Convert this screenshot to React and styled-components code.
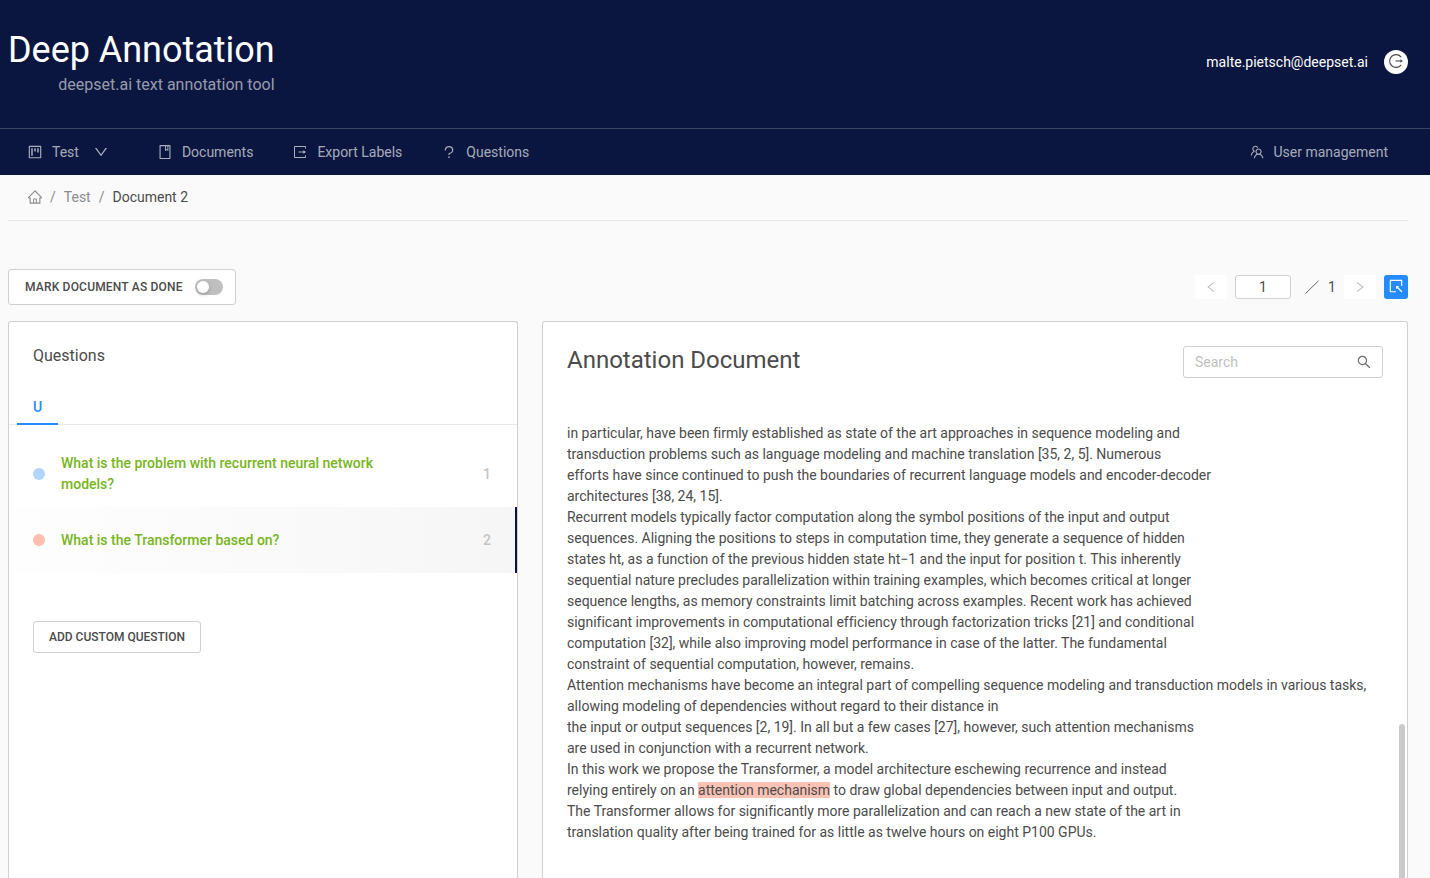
import React from "react";
import styled, { createGlobalStyle, css } from "styled-components";
import {
  AiOutlineProject,
  AiOutlineDown,
  AiOutlineBook,
  AiOutlineQuestion,
  AiOutlineTeam,
  AiOutlineHome,
  AiOutlineSelect,
  AiOutlineSearch,
  AiOutlineLeft,
  AiOutlineRight,
} from "react-icons/ai";

const GlobalStyle = createGlobalStyle`
  *, *::before, *::after { box-sizing: border-box; }
  html, body { margin: 0; padding: 0; overflow: hidden; }
  body {
    background: #fafafa;
    color: #4b4b4b;
    font-family: Roboto, "Liberation Sans", sans-serif;
    font-size: 14px;
    line-height: 21px;
  }
  svg { display: block; flex: none; }
  button, input { font-family: inherit; color: inherit; margin: 0; }
  h1, h2, h3, p, ol { margin: 0; padding: 0; font-weight: 400; list-style: none; }
`;

const Page = styled.div`
  display: flex;
  flex-direction: column;
  height: 878px;
  overflow: hidden;
`;

const Header = styled.header`
  display: flex;
  justify-content: space-between;
  height: 128px;
  padding: 0 22px 0 8px;
  background: #0a163f;
  color: #fff;
  flex: none;
`;

const Brand = styled.div`
  display: flex;
  flex-direction: column;
  align-items: flex-end;
  padding-top: 27px;
`;

const BrandTitle = styled.h1`
  font-size: 36px;
  line-height: 46px;
  letter-spacing: -0.03px;
`;

const BrandSubtitle = styled.p`
  font-size: 16px;
  line-height: 24px;
  color: rgba(255, 255, 255, 0.58);
`;

const Account = styled.div`
  display: flex;
  align-items: center;
  align-self: flex-start;
  gap: 16px;
  margin-top: 50px;
  height: 24px;
`;

const LogoutButton = styled.button`
  display: flex;
  align-items: center;
  justify-content: center;
  width: 24px;
  height: 24px;
  padding: 0 0 2px;
  border: 0;
  border-radius: 50%;
  background: #fff;
  color: #4b4b4b;
  font-size: 14px;
`;

const Nav = styled.nav`
  display: flex;
  height: 47px;
  padding: 0 42px 0 28px;
  gap: 40px;
  background: #0a163f;
  border-top: 1px solid #3b4565;
  flex: none;
`;

const NavItem = styled.a`
  display: flex;
  align-items: center;
  gap: 10px;
  color: rgba(255, 255, 255, 0.65);
  margin-left: ${(p) => (p.$end ? "auto" : "0")};
  margin-right: ${(p) => (p.$menu ? "10px" : "0")};
`;

const MenuArrow = styled.span`
  margin-left: 5px;
`;

const Content = styled.main`
  display: flex;
  flex-direction: column;
  flex: 1;
  min-height: 0;
  padding: 0 22px 0 8px;
`;

const Breadcrumb = styled.div`
  display: flex;
  align-items: center;
  gap: 8px;
  height: 46px;
  padding: 0 20px 1px;
  border-bottom: 1px solid #e8e8e8;
  color: #8c8c8c;
  flex: none;
`;

const CurrentCrumb = styled.span`
  color: #4b4b4b;
`;

const Toolbar = styled.div`
  display: flex;
  justify-content: space-between;
  align-items: center;
  margin: 48px 0 16px;
  height: 36px;
  flex: none;
`;

const outlined = css`
  background: #fff;
  border: 1px solid #d0d0d0;
  border-radius: 3px;
`;

const DoneToggle = styled.div`
  ${outlined}
  display: flex;
  align-items: center;
  justify-content: space-between;
  width: 228px;
  height: 36px;
  padding: 0 12px 0 16px;
  font-size: 12px;
  font-weight: 500;
  letter-spacing: 0.19px;
`;

const Switch = styled.span`
  display: flex;
  align-items: center;
  width: 28px;
  height: 16px;
  padding: 0 2px;
  border-radius: 8px;
  background: #bfbfbf;

  &::after {
    content: "";
    width: 12px;
    height: 12px;
    border-radius: 50%;
    background: #fff;
    box-shadow: 0 2px 4px rgba(0, 35, 11, 0.2);
  }
`;

const Pager = styled.div`
  display: flex;
  align-items: center;
  gap: 8px;
`;

const PagerButton = styled.button`
  display: flex;
  align-items: center;
  justify-content: center;
  width: 32px;
  height: 24px;
  padding: 0;
  border: 0;
  border-radius: 2px;
  background: #fff;
  color: #b9b9b9;
  font-size: 12px;
`;

const PageInput = styled.input`
  ${outlined}
  width: 56px;
  height: 24px;
  padding: 0;
  text-align: center;
  font-size: 14px;
`;

const PageTotal = styled.div`
  display: flex;
  align-items: center;
  gap: 9px;
  width: 37px;
  padding-left: 6px;
`;

const SelectButton = styled(PagerButton)`
  width: 24px;
  padding-bottom: 2px;
  border-radius: 3px;
  background: #268bff;
  color: #fff;
  font-size: 14px;
`;

const Columns = styled.div`
  display: grid;
  grid-template-columns: 510px 866px;
  gap: 24px;
  flex: 1;
  min-height: 0;
`;

const Panel = styled.section`
  ${outlined}
  border-bottom: 0;
  border-radius: 3px 3px 0 0;
  min-height: 0;
`;

const PanelTitle = styled.h3`
  padding: 22px 24px 0;
  font-size: 16px;
  line-height: 24px;
`;

const Tabs = styled.div`
  display: flex;
  height: 38px;
  margin-top: 19px;
  padding-left: 8px;
  border-bottom: 1px solid #e8e8e8;
`;

const Tab = styled.div`
  width: 41px;
  height: 38px;
  padding: 10px 16px 0;
  border-bottom: 2px solid #268bff;
  color: #268bff;
  font-weight: 500;
`;

const QuestionList = styled.ol`
  padding-top: 16px;
`;

const Question = styled.li`
  display: flex;
  align-items: center;
  height: 66px;
  padding: 0 ${(p) => (p.$active ? "24px" : "26px")} 0 24px;
  ${(p) =>
    p.$active &&
    css`
      background: linear-gradient(90deg, #fefefe, #f6f6f6);
      border-right: 2px solid #0a163f;
    `}
`;

const Dot = styled.span`
  width: 12px;
  height: 12px;
  border-radius: 50%;
  background: ${(p) => p.$color};
`;

const QuestionText = styled.span`
  width: 340px;
  margin-left: 16px;
  color: #78b51c;
  font-weight: 500;
`;

const QuestionNumber = styled.span`
  margin-left: auto;
  color: #c4c4c4;
  font-weight: 500;
`;

const AddButton = styled.button`
  ${outlined}
  display: block;
  width: 168px;
  height: 32px;
  margin: 48px 0 0 24px;
  padding: 0;
  font-size: 12px;
  font-weight: 500;
`;

const DocumentPanel = styled(Panel)`
  position: relative;
  padding: 24px;
`;

const DocumentHeader = styled.div`
  display: flex;
  justify-content: space-between;
  height: 32px;
`;

const DocumentTitle = styled.h2`
  font-size: 24px;
  line-height: 28px;
`;

const SearchBox = styled.label`
  ${outlined}
  display: flex;
  align-items: center;
  justify-content: space-between;
  width: 200px;
  height: 32px;
  padding: 0 11px;
  color: #6f6f6f;
  font-size: 14px;
`;

const SearchInput = styled.input`
  width: 140px;
  padding: 0;
  border: 0;
  outline: 0;
  background: none;
  font-size: 14px;

  &::placeholder {
    color: #bfbfbf;
    opacity: 1;
  }
`;

const DocumentText = styled.div`
  margin-top: 45px;
  white-space: pre;
  letter-spacing: -0.005px;
`;

const Highlight = styled.mark`
  background: #fcc3b5;
  color: inherit;
`;

const ScrollThumb = styled.div`
  position: absolute;
  right: 2px;
  top: 402px;
  bottom: 0;
  width: 6px;
  border-radius: 3px 3px 0 0;
  background: #cacaca;
`;

const questions = [
  { color: "#b1d5ff", text: "What is the problem with recurrent neural network models?" },
  { color: "#fcbeae", text: "What is the Transformer based on?", active: true },
];

const lines = [
  "in particular, have been firmly established as state of the art approaches in sequence modeling and",
  "transduction problems such as language modeling and machine translation [35, 2, 5]. Numerous",
  "efforts have since continued to push the boundaries of recurrent language models and encoder-decoder",
  "architectures [38, 24, 15].",
  "Recurrent models typically factor computation along the symbol positions of the input and output",
  "sequences. Aligning the positions to steps in computation time, they generate a sequence of hidden",
  "states ht, as a function of the previous hidden state ht−1 and the input for position t. This inherently",
  "sequential nature precludes parallelization within training examples, which becomes critical at longer",
  "sequence lengths, as memory constraints limit batching across examples. Recent work has achieved",
  "significant improvements in computational efficiency through factorization tricks [21] and conditional",
  "computation [32], while also improving model performance in case of the latter. The fundamental",
  "constraint of sequential computation, however, remains.",
  "Attention mechanisms have become an integral part of compelling sequence modeling and transduction models in various tasks,",
  "allowing modeling of dependencies without regard to their distance in",
  "the input or output sequences [2, 19]. In all but a few cases [27], however, such attention mechanisms",
  "are used in conjunction with a recurrent network.",
  "In this work we propose the Transformer, a model architecture eschewing recurrence and instead",
  <>relying entirely on an <Highlight>attention mechanism</Highlight> to draw global dependencies between input and output.</>,
  "The Transformer allows for significantly more parallelization and can reach a new state of the art in",
  "translation quality after being trained for as little as twelve hours on eight P100 GPUs.",
];

// The glyphs keep a margin inside their 1024 grid; this view box trims it.
function Icon({ as: Glyph, size = 14 }) {
  return <Glyph size={size} viewBox="64 64 896 896" />;
}

function ExportIcon() {
  return (
    <svg width="14" height="14" viewBox="0 0 14 14" fill="none" stroke="currentColor">
      <path d="M12.5 3.6V1.5h-11v11h11v-2.1" />
      <path d="M5.5 7h6" />
      <path d="M10.4 5.2 13 7l-2.6 1.8z" fill="currentColor" stroke="none" />
    </svg>
  );
}

function LogoutIcon() {
  return (
    <svg width="14" height="14" viewBox="0 0 14 14" fill="none" stroke="currentColor" strokeWidth="1.1">
      <path d="M12.2 3.2A6.4 6.4 0 1 0 12.2 10.8" />
      <path d="M6.6 7h5.2" />
      <path d="M11.3 5.2 13.8 7l-2.5 1.8z" fill="currentColor" stroke="none" />
    </svg>
  );
}

export default function App() {
  return (
    <Page>
      <GlobalStyle />
      <Header>
        <Brand>
          <BrandTitle>Deep Annotation</BrandTitle>
          <BrandSubtitle>deepset.ai text annotation tool</BrandSubtitle>
        </Brand>
        <Account>
          <span>malte.pietsch@deepset.ai</span>
          <LogoutButton aria-label="Log out"><LogoutIcon /></LogoutButton>
        </Account>
      </Header>
      <Nav>
        <NavItem $menu>
          <Icon as={AiOutlineProject} />
          <span>Test</span>
          <MenuArrow><Icon as={AiOutlineDown} /></MenuArrow>
        </NavItem>
        <NavItem><Icon as={AiOutlineBook} /><span>Documents</span></NavItem>
        <NavItem><ExportIcon /><span>Export Labels</span></NavItem>
        <NavItem><Icon as={AiOutlineQuestion} /><span>Questions</span></NavItem>
        <NavItem $end><Icon as={AiOutlineTeam} /><span>User management</span></NavItem>
      </Nav>
      <Content>
        <Breadcrumb>
          <Icon as={AiOutlineHome} />
          <span>/</span>
          <span>Test</span>
          <span>/</span>
          <CurrentCrumb>Document 2</CurrentCrumb>
        </Breadcrumb>
        <Toolbar>
          <DoneToggle>MARK DOCUMENT AS DONE<Switch /></DoneToggle>
          <Pager>
            <PagerButton aria-label="Previous"><Icon as={AiOutlineLeft} size={12} /></PagerButton>
            <PageInput defaultValue="1" />
            <PageTotal>
              <svg width="14" height="14" viewBox="0 0 14 14" stroke="#6b6b6b">
                <path d="M.5 13.5 13.5.8" />
              </svg>
              <span>1</span>
            </PageTotal>
            <PagerButton aria-label="Next"><Icon as={AiOutlineRight} size={12} /></PagerButton>
            <SelectButton aria-label="Select"><Icon as={AiOutlineSelect} size={14} /></SelectButton>
          </Pager>
        </Toolbar>
        <Columns>
          <Panel>
            <PanelTitle>Questions</PanelTitle>
            <Tabs><Tab>U</Tab></Tabs>
            <QuestionList>
              {questions.map((q, i) => (
                <Question key={q.text} $active={q.active}>
                  <Dot $color={q.color} />
                  <QuestionText>{q.text}</QuestionText>
                  <QuestionNumber>{i + 1}</QuestionNumber>
                </Question>
              ))}
            </QuestionList>
            <AddButton>ADD CUSTOM QUESTION</AddButton>
          </Panel>
          <DocumentPanel>
            <DocumentHeader>
              <DocumentTitle>Annotation Document</DocumentTitle>
              <SearchBox>
                <SearchInput placeholder="Search" />
                <Icon as={AiOutlineSearch} />
              </SearchBox>
            </DocumentHeader>
            <DocumentText>
              {lines.map((line, i) => <p key={i}>{line}</p>)}
            </DocumentText>
            <ScrollThumb />
          </DocumentPanel>
        </Columns>
      </Content>
    </Page>
  );
}
